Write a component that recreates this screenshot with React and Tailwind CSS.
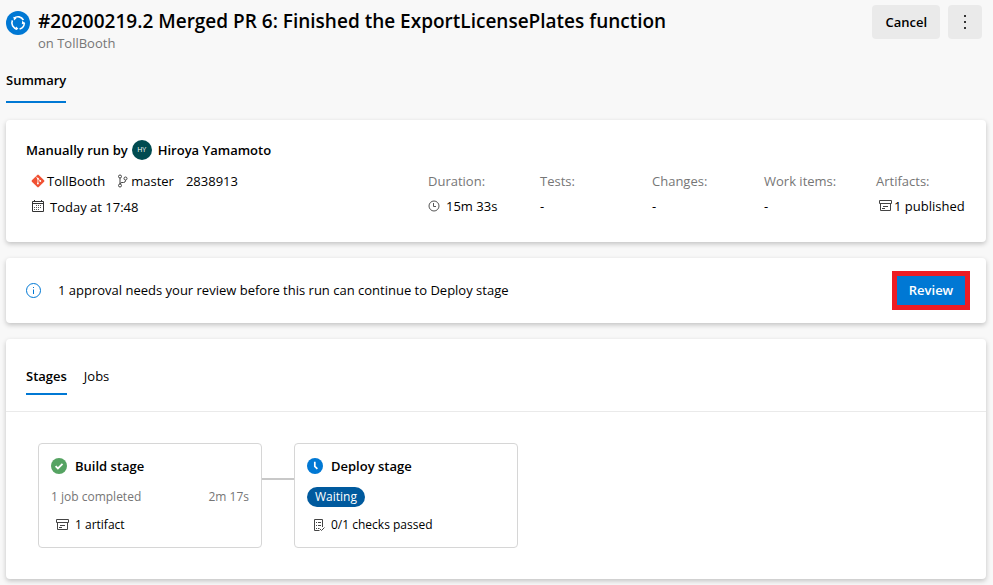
import React from "react";

function RunIcon() {
  return (
    <svg viewBox="0 0 24 24" className="mt-1 size-6 shrink-0" aria-hidden="true">
      <circle cx="12" cy="12" r="12" fill="#0078d4" />
      <g fill="none" stroke="#fff" strokeWidth="1.6">
        <path d="M8 7.2A6.2 6.2 0 0 1 17.4 9" />
        <path d="M18.2 11.6A6.2 6.2 0 0 1 13.6 18" />
        <path d="M11.2 18.1A6.2 6.2 0 0 1 6.4 9.4" />
      </g>
      <path d="M7.4 5.8l.6 3.6 2.6-2.2zM19.4 12.4l-3.2-2.6-.4 3.4zM9.6 19l2.8-1.2-2.2-2.2z" fill="#fff" />
    </svg>
  );
}

function GitIcon() {
  return (
    <svg viewBox="0 0 14 14" className="size-[14px] shrink-0" aria-hidden="true">
      <path d="M6.3.9a1 1 0 0 1 1.4 0l5.4 5.4a1 1 0 0 1 0 1.4l-5.4 5.4a1 1 0 0 1-1.4 0L.9 7.7a1 1 0 0 1 0-1.4z" fill="#f05133" />
      <path d="M5 2.6l1.9 1.9v5M6.9 4.6l2.3 2.3" fill="none" stroke="#fff" strokeWidth="0.8" />
      <g fill="#fff">
        <circle cx="6.9" cy="4.6" r="0.9" />
        <circle cx="6.9" cy="9.5" r="0.9" />
        <circle cx="9.3" cy="7" r="0.9" />
      </g>
    </svg>
  );
}

function BranchIcon() {
  return (
    <svg viewBox="0 0 12 14" className="h-[14px] w-3 shrink-0" fill="none" stroke="#444" aria-hidden="true">
      <circle cx="3" cy="2.5" r="1.5" />
      <circle cx="3" cy="11.5" r="1.5" />
      <circle cx="8.5" cy="4.5" r="1.5" />
      <path d="M3 4v6M8.5 6v.5a2 2 0 0 1-2 2H5a2 2 0 0 0-2 1.5" />
    </svg>
  );
}

function CalendarIcon() {
  return (
    <svg viewBox="0 0 14 14" className="size-[14px] shrink-0" fill="none" stroke="#333" aria-hidden="true">
      <path d="M1.5 1.5h11v10h-11zM1.5 3.5h11M3.5 0v2M10.5 0v2" />
      <path d="M5 5.5h6M3 7.5h8M3 9.5h6" strokeDasharray="1 1" stroke="#555" />
    </svg>
  );
}

function ClockIcon() {
  return (
    <svg viewBox="0 0 12 12" className="size-3 shrink-0" fill="none" stroke="#555" aria-hidden="true">
      <circle cx="6" cy="6" r="5" />
      <path d="M5.5 3v3.5H8" />
    </svg>
  );
}

function ArtifactIcon() {
  return (
    <svg viewBox="0 0 13 12" className="h-3 w-[13px] shrink-0" fill="none" stroke="#444" aria-hidden="true">
      <path d="M.5 .5h12v3H.5zM1.5 3.5v7h10v-7M4 6.5h5M3 8.5h3" />
    </svg>
  );
}

function ChecklistIcon() {
  return (
    <svg viewBox="0 0 12 13" className="h-[13px] w-3 shrink-0" fill="none" stroke="#444" aria-hidden="true">
      <path d="M9.5 8V.5h-8v11h5" />
      <path d="M3 3.5h1M5 3.5h3M3 6.5h1M5 6.5h3M3 9.5h1M5 9.5h1.5M7 10l1.5 1.5 3-3" />
    </svg>
  );
}

function InfoIcon() {
  return (
    <svg viewBox="0 0 16 16" className="size-4 shrink-0" fill="none" stroke="#0078d4" aria-hidden="true">
      <circle cx="7.5" cy="7.5" r="7" />
      <path d="M7.5 6.5V11M7.5 4v1" />
    </svg>
  );
}

function SuccessIcon() {
  return (
    <svg viewBox="0 0 16 16" className="size-4 shrink-0" fill="none" aria-hidden="true">
      <circle cx="8" cy="8" r="8" fill="#55a362" />
      <path d="M4.6 8.2l2.3 2.3 4.6-4.6" stroke="#fff" strokeWidth="1.8" />
    </svg>
  );
}

function WaitingIcon() {
  return (
    <svg viewBox="0 0 16 16" className="size-4 shrink-0" fill="none" aria-hidden="true">
      <circle cx="8" cy="8" r="8" fill="#0078d4" />
      <path d="M7.8 3.8v4.6l2.6 2.4" stroke="#fff" strokeWidth="1.7" />
    </svg>
  );
}

const card = "rounded bg-white shadow-[0_2px_5px_rgba(0,0,0,0.22)]";

function Stat({ label, children }) {
  return (
    <div className="w-28 shrink-0 last:w-[90px]">
      <dt className="leading-5 text-[#767676]">{label}</dt>
      <dd className="mt-[5px] flex items-center whitespace-nowrap leading-5">{children}</dd>
    </div>
  );
}

export default function App() {
  return (
    <div className="min-h-screen bg-[#f8f8f8] pb-[6px] pl-[6px] pr-[7px] font-['Segoe_UI','Open_Sans',sans-serif] text-[13px] text-[#000]">
      <header className="flex items-start pt-[5px]">
        <div className="flex min-w-0 grow gap-2 pt-[2px]">
          <RunIcon />
          <div className="min-w-0">
            <h1 className="text-[19px] font-semibold leading-7">#20200219.2 Merged PR 6: Finished the ExportLicensePlates function</h1>
            <p className="leading-4 text-[#767676]">on TollBooth</p>
          </div>
        </div>
        <div className="flex gap-2 pr-1">
          <button className="h-[34px] rounded-sm bg-[#eaeaea] px-[13px] pt-[2px] font-semibold">Cancel</button>
          <button aria-label="More actions" className="flex h-[34px] w-[34px] items-center justify-center rounded-sm bg-[#eaeaea]">
            <svg viewBox="0 0 2 14" className="h-[14px] w-[2px]" fill="#333" aria-hidden="true">
              <path d="M0 0h2v2H0zM0 6h2v2H0zM0 12h2v2H0z" />
            </svg>
          </button>
        </div>
      </header>

      <nav className="mt-[19px] flex">
        <a href="#summary" className="border-b-2 border-[#0078d4] pb-[11px] font-semibold leading-5">Summary</a>
      </nav>

      <main className="mt-[17px] flex flex-col gap-4">
        <section className={card + " px-5 pb-[25px] pt-5"}>
          <h2 className="flex items-center font-semibold leading-5">
            Manually run by
            <span className="ml-1 mr-[6px] flex size-5 items-center justify-center rounded-full bg-[#004b50] text-[7px] font-normal text-white">HY</span>
            Hiroya Yamamoto
          </h2>
          <div className="mt-[11px] flex justify-between">
            <div className="pl-[5px]">
              <div className="flex items-center leading-5">
                <GitIcon />
                <span className="ml-[2px]">TollBooth</span>
                <span className="ml-3 flex items-center gap-[2px]"><BranchIcon />master</span>
                <span className="ml-3">2838913</span>
              </div>
              <div className="mt-[6px] flex items-center gap-[5px] leading-5">
                <CalendarIcon />
                Today at 17:48
              </div>
            </div>
            <dl className="flex">
              <Stat label="Duration:"><ClockIcon /><span className="ml-[6px]">15m 33s</span></Stat>
              <Stat label="Tests:">-</Stat>
              <Stat label="Changes:">-</Stat>
              <Stat label="Work items:">-</Stat>
              <Stat label="Artifacts:"><span className="ml-[3px] flex items-center gap-[2px]"><ArtifactIcon />1 published</span></Stat>
            </dl>
          </div>
        </section>

        <section className={card + " flex items-center py-[13px] pl-5 pr-4"}>
          <InfoIcon />
          <p className="ml-4 grow">1 approval needs your review before this run can continue to Deploy stage</p>
          <button className="h-[39px] w-[78px] border-[5px] border-[#ed1c24] bg-[#0078d4] font-semibold text-white">Review</button>
        </section>

        <section className={card}>
          <nav className="flex gap-[17px] border-b border-[#eaeaea] px-5 pb-4 pt-[27px] leading-5">
            <a href="#stages" className="border-b-2 border-[#0078d4] pb-[7px] font-semibold">Stages</a>
            <a href="#jobs">Jobs</a>
          </nav>
          <div className="flex items-start px-8 pb-[31px] pt-[31px]">
            <article className="h-[105px] w-56 rounded border border-[#d6d6d6] px-3 pt-3">
              <h3 className="flex items-center gap-2 font-semibold leading-5"><SuccessIcon />Build stage</h3>
              <p className="mt-[11px] flex justify-between text-xs leading-5 text-[#767676]"><span>1 job completed</span><span>2m 17s</span></p>
              <p className="mt-2 flex items-center gap-[6px] pl-[5px] text-xs leading-5"><ArtifactIcon />1 artifact</p>
            </article>
            <div className="mt-[35px] h-[2px] w-8 bg-[#c8c8c8]" />
            <article className="h-[105px] w-56 rounded border border-[#d6d6d6] px-3 pt-3">
              <h3 className="flex items-center gap-2 font-semibold leading-5"><WaitingIcon />Deploy stage</h3>
              <p className="mt-[11px] flex text-xs leading-5"><span className="rounded-full bg-[#005a9e] px-2 text-white">Waiting</span></p>
              <p className="mt-2 flex items-center gap-[6px] pl-[6px] text-xs leading-5"><ChecklistIcon />0/1 checks passed</p>
            </article>
          </div>
        </section>
      </main>
    </div>
  );
}
